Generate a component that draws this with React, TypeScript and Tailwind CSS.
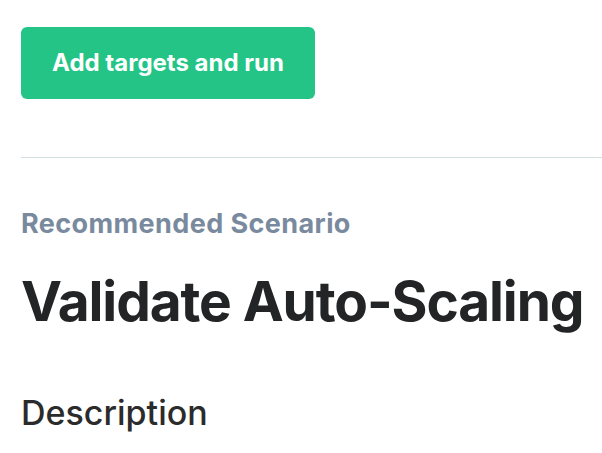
export default function App() {
  return (
    <div className="w-[602px] h-[453px] overflow-hidden bg-white pl-[21px] pt-[27px]" style={{ fontFamily: "Inter, 'Noto Sans', sans-serif" }}>
      <button className="w-[294px] h-[72px] rounded-[6px] bg-[#23c486] text-white text-[24px] leading-[24px] font-bold flex items-center justify-center">
        Add targets and run
      </button>
      <div className="mt-[58px] h-px bg-[#d3dee2]" />
      <div className="mt-[52px] text-[27px] leading-[27px] font-bold text-[#7a8a9e] tracking-[0.4px]">Recommended Scenario</div>
      <h1 className="mt-[37px] text-[55px] leading-[55px] font-bold text-[#222426] tracking-[-1.1px]">Validate Auto-Scaling</h1>
      <h2 className="mt-[67px] text-[34px] leading-[34px] font-medium text-[#2b2b2b]">Description</h2>
    </div>
  );
}
